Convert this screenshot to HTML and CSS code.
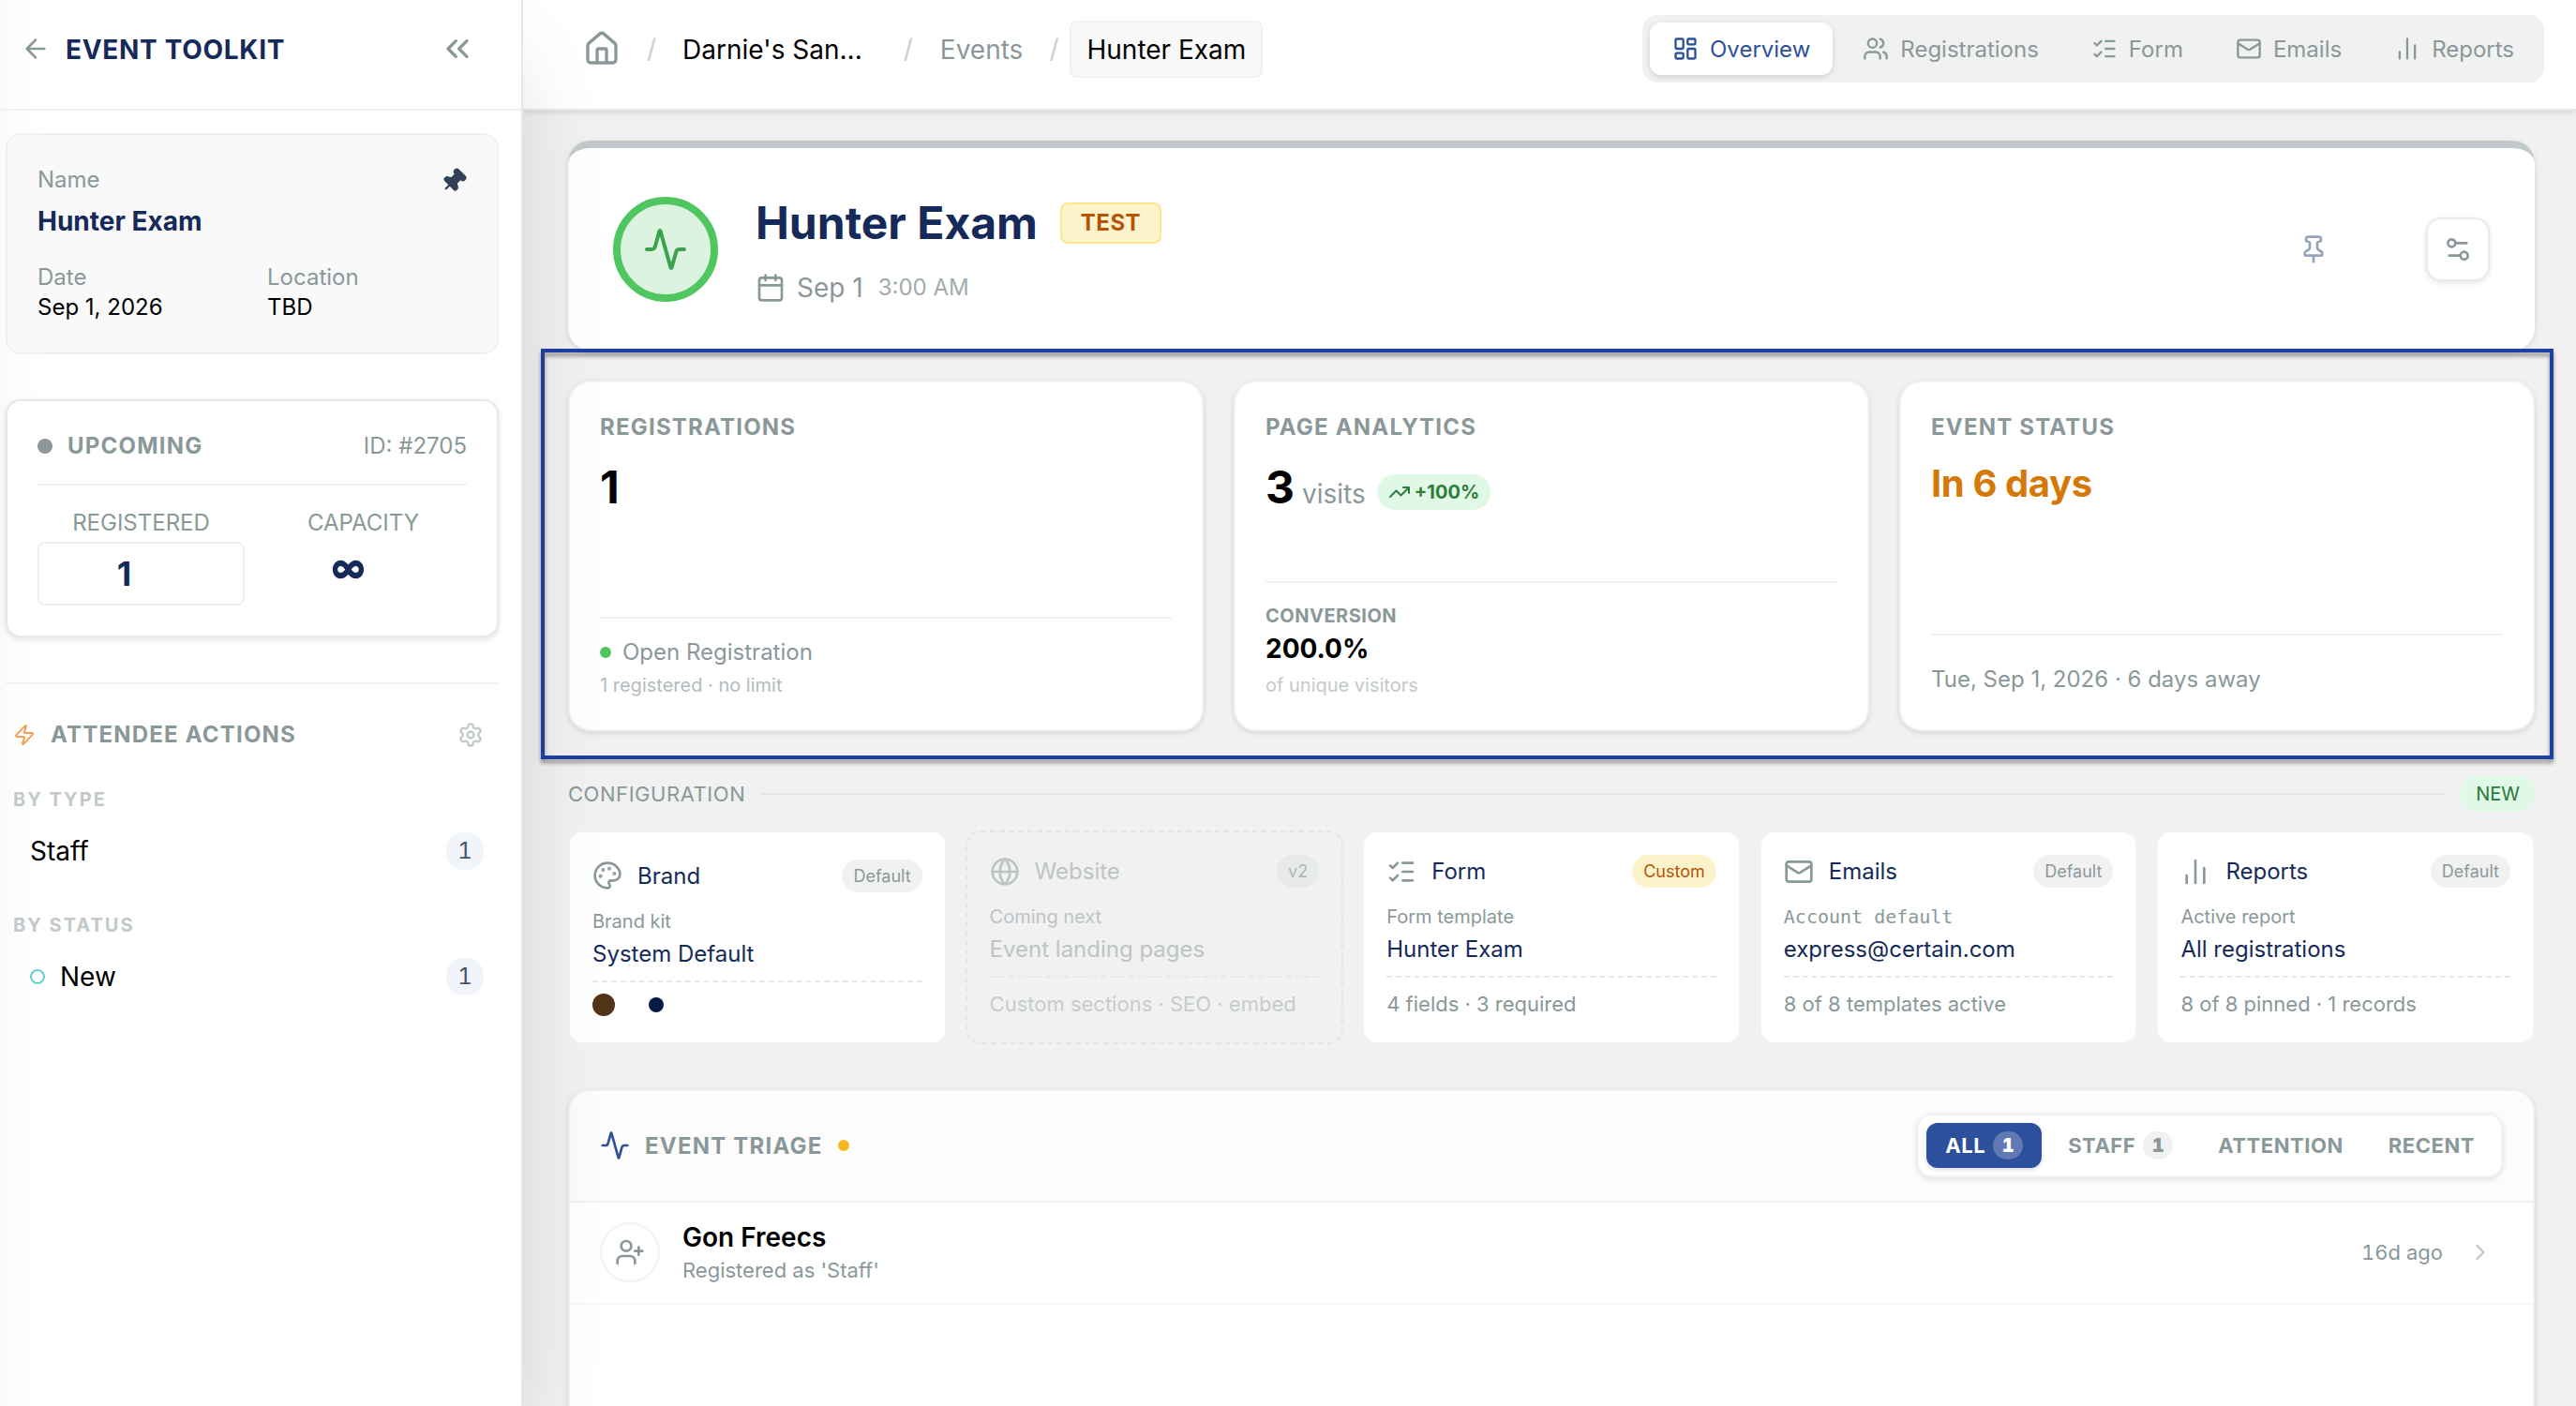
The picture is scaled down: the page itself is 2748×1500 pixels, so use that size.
FILE: index.html
```html
<!doctype html>
<html lang="en">
  <head>
    <meta charset="UTF-8" />
    <meta name="viewport" content="width=device-width, initial-scale=1.0" />
    <link rel="stylesheet" href="styles.css">
    <title>Hunter Exam - Event Overview</title>
  </head>
  <body>
    <!-- icon sprite -->
    <svg class="sprite" aria-hidden="true">
      <symbol id="arrow-left" viewBox="0 0 24 24"><path d="m12 19-7-7 7-7M19 12H5" /></symbol>
      <symbol id="chevrons-left" viewBox="0 0 24 24"><path d="m11 17-5-5 5-5M18 17l-5-5 5-5" /></symbol>
      <symbol id="chevron-right" viewBox="0 0 24 24"><path d="m9 18 6-6-6-6" /></symbol>
      <symbol id="pin" viewBox="0 0 24 24"><path d="M12 17v5M9 10.76a2 2 0 0 1-1.11 1.79l-1.78.9A2 2 0 0 0 5 15.24V16a1 1 0 0 0 1 1h12a1 1 0 0 0 1-1v-.76a2 2 0 0 0-1.11-1.79l-1.78-.9A2 2 0 0 1 15 10.76V7a1 1 0 0 1 1-1 2 2 0 0 0 0-4H8a2 2 0 0 0 0 4 1 1 0 0 1 1 1z" /></symbol>
      <symbol id="zap" viewBox="0 0 24 24"><path d="M4 14a1 1 0 0 1-.78-1.63l9.9-10.2a.5.5 0 0 1 .86.46l-1.92 6.02A1 1 0 0 0 13 10h7a1 1 0 0 1 .78 1.63l-9.9 10.2a.5.5 0 0 1-.86-.46l1.92-6.02A1 1 0 0 0 11 14z" /></symbol>
      <symbol id="settings" viewBox="0 0 24 24"><path d="M9.671 4.136a2.34 2.34 0 0 1 4.659 0 2.34 2.34 0 0 0 3.319 1.915 2.34 2.34 0 0 1 2.33 4.033 2.34 2.34 0 0 0 0 3.831 2.34 2.34 0 0 1-2.33 4.033 2.34 2.34 0 0 0-3.319 1.915 2.34 2.34 0 0 1-4.659 0 2.34 2.34 0 0 0-3.32-1.915 2.34 2.34 0 0 1-2.33-4.033 2.34 2.34 0 0 0 0-3.831A2.34 2.34 0 0 1 6.35 6.051a2.34 2.34 0 0 0 3.319-1.915" /><circle cx="12" cy="12" r="3" /></symbol>
      <symbol id="house" viewBox="0 0 24 24"><path d="M15 21v-8a1 1 0 0 0-1-1h-4a1 1 0 0 0-1 1v8M3 10a2 2 0 0 1 .709-1.528l7-5.999a2 2 0 0 1 2.582 0l7 5.999A2 2 0 0 1 21 10v9a2 2 0 0 1-2 2H5a2 2 0 0 1-2-2z" /></symbol>
      <symbol id="dashboard" viewBox="0 0 24 24"><rect width="7" height="9" x="3" y="3" rx="1" /><rect width="7" height="5" x="14" y="3" rx="1" /><rect width="7" height="9" x="14" y="12" rx="1" /><rect width="7" height="5" x="3" y="16" rx="1" /></symbol>
      <symbol id="users" viewBox="0 0 24 24"><path d="M16 21v-2a4 4 0 0 0-4-4H6a4 4 0 0 0-4 4v2M16 3.128a4 4 0 0 1 0 7.744M22 21v-2a4 4 0 0 0-3-3.87" /><circle cx="9" cy="7" r="4" /></symbol>
      <symbol id="list-checks" viewBox="0 0 24 24"><path d="M13 5h8M13 12h8M13 19h8M3 17l2 2 4-4M3 7l2 2 4-4" /></symbol>
      <symbol id="mail" viewBox="0 0 24 24"><path d="m22 7-8.991 5.727a2 2 0 0 1-2.009 0L2 7" /><rect x="2" y="4" width="20" height="16" rx="2" /></symbol>
      <symbol id="bars" viewBox="0 0 24 24"><path d="M5 21v-6M12 21V3M19 21V9" /></symbol>
      <symbol id="activity" viewBox="0 0 24 24"><path d="M22 12h-2.48a2 2 0 0 0-1.93 1.46l-2.35 8.36a.25.25 0 0 1-.48 0L9.24 2.18a.25.25 0 0 0-.48 0l-2.35 8.36A2 2 0 0 1 4.49 12H2" /></symbol>
      <symbol id="calendar" viewBox="0 0 24 24"><path d="M8 2v4M16 2v4M3 10h18" /><rect width="18" height="18" x="3" y="4" rx="2" /></symbol>
      <symbol id="sliders" viewBox="0 0 24 24"><path d="M14 17H5M19 7h-9" /><circle cx="17" cy="17" r="3" /><circle cx="7" cy="7" r="3" /></symbol>
      <symbol id="trending-up" viewBox="0 0 24 24"><path d="M16 7h6v6M22 7l-8.5 8.5-5-5L2 17" /></symbol>
      <symbol id="palette" viewBox="0 0 24 24"><path d="M12 22a1 1 0 0 1 0-20 10 9 0 0 1 10 9 5 5 0 0 1-5 5h-2.25a1.75 1.75 0 0 0-1.4 2.8l.3.4a1.75 1.75 0 0 1-1.4 2.8z" /><circle cx="13.5" cy="6.5" r=".5" fill="currentColor" /><circle cx="17.5" cy="10.5" r=".5" fill="currentColor" /><circle cx="6.5" cy="12.5" r=".5" fill="currentColor" /><circle cx="8.5" cy="7.5" r=".5" fill="currentColor" /></symbol>
      <symbol id="globe" viewBox="0 0 24 24"><circle cx="12" cy="12" r="10" /><path d="M12 2a14.5 14.5 0 0 0 0 20 14.5 14.5 0 0 0 0-20M2 12h20" /></symbol>
      <symbol id="user-plus" viewBox="0 0 24 24"><path d="M16 21v-2a4 4 0 0 0-4-4H6a4 4 0 0 0-4 4v2M19 8v6M22 11h-6" /><circle cx="9" cy="7" r="4" /></symbol>
    </svg>

    <div class="app">
      <aside class="sidebar">
        <div class="sidebar-header">
          <svg class="icon icon-32"><use href="#arrow-left" /></svg>
          <h2>EVENT TOOLKIT</h2>
          <svg class="icon icon-40"><use href="#chevrons-left" /></svg>
        </div>

        <div class="sidebar-body">
          <section class="info-card">
            <div class="info-top">
              <span class="info-label">Name</span>
              <svg class="icon icon-28 pin-filled"><use href="#pin" /></svg>
            </div>
            <div class="info-name">Hunter Exam</div>
            <div class="info-grid">
              <div>
                <div class="info-label">Date</div>
                <div class="info-value">Sep 1, 2026</div>
              </div>
              <div>
                <div class="info-label">Location</div>
                <div class="info-value">TBD</div>
              </div>
            </div>
          </section>

          <section class="count-card">
            <div class="count-top">
              <span class="status-dot"></span>
              <span class="status-text">UPCOMING</span>
              <span class="event-id">ID: #2705</span>
            </div>
            <div class="count-grid">
              <div>
                <div class="count-label">REGISTERED</div>
                <div class="count-value boxed">1</div>
              </div>
              <div>
                <div class="count-label">CAPACITY</div>
                <div class="count-value unlimited"><span>∞</span></div>
              </div>
            </div>
          </section>

          <section class="actions">
            <div class="actions-title">
              <svg class="icon icon-24 zap"><use href="#zap" /></svg>
              <h3>ATTENDEE ACTIONS</h3>
              <svg class="icon icon-28 gear"><use href="#settings" /></svg>
            </div>
            <div class="group-label">BY TYPE</div>
            <div class="action-row">
              <span>Staff</span>
              <span class="count-badge">1</span>
            </div>
            <div class="group-label second">BY STATUS</div>
            <div class="action-row">
              <span class="ring"></span>
              <span>New</span>
              <span class="count-badge">1</span>
            </div>
          </section>
        </div>
      </aside>

      <div class="main">
        <header class="topbar">
          <nav class="breadcrumb">
            <svg class="icon icon-40"><use href="#house" /></svg>
            <span class="slash first">/</span>
            <span class="crumb-account">Darnie's San...</span>
            <span class="slash">/</span>
            <span class="crumb-events">Events</span>
            <span class="slash last">/</span>
            <span class="crumb-current">Hunter Exam</span>
          </nav>
          <nav class="tabs">
            <a class="tab active"><svg class="icon icon-28"><use href="#dashboard" /></svg>Overview</a>
            <a class="tab"><svg class="icon icon-28"><use href="#users" /></svg>Registrations</a>
            <a class="tab"><svg class="icon icon-28"><use href="#list-checks" /></svg>Form</a>
            <a class="tab"><svg class="icon icon-28"><use href="#mail" /></svg>Emails</a>
            <a class="tab"><svg class="icon icon-28"><use href="#bars" /></svg>Reports</a>
          </nav>
        </header>

        <main class="content">
          <section class="hero">
            <div class="hero-badge"><svg class="icon icon-48"><use href="#activity" /></svg></div>
            <div class="hero-text">
              <div class="hero-title">
                <h1>Hunter Exam</h1>
                <span class="test-tag">TEST</span>
              </div>
              <div class="hero-date">
                <svg class="icon icon-32"><use href="#calendar" /></svg>
                <span>Sep 1</span>
                <span class="hero-time">3:00 AM</span>
              </div>
            </div>
            <svg class="icon icon-32 hero-pin"><use href="#pin" /></svg>
            <button class="hero-settings"><svg class="icon icon-32"><use href="#sliders" /></svg></button>
          </section>

          <div class="stats">
            <section class="stat">
              <h3>REGISTRATIONS</h3>
              <div class="stat-number">1</div>
              <div class="stat-foot">
                <div class="open-reg"><span class="green-dot"></span>Open Registration</div>
                <div class="stat-hint">1 registered · no limit</div>
              </div>
            </section>
            <section class="stat">
              <h3>PAGE ANALYTICS</h3>
              <div class="stat-number">3<span class="unit">visits</span><span class="trend"><svg class="icon icon-24"><use href="#trending-up" /></svg>+100%</span></div>
              <div class="stat-foot conversion">
                <div class="conv-label">CONVERSION</div>
                <div class="conv-value">200.0%</div>
                <div class="stat-hint light">of unique visitors</div>
              </div>
            </section>
            <section class="stat">
              <h3>EVENT STATUS</h3>
              <div class="stat-days">In 6 days</div>
              <div class="stat-foot away">Tue, Sep 1, 2026 · 6 days away</div>
            </section>
            <div class="highlight"></div>
          </div>

          <div class="config-head">
            <span class="config-title">CONFIGURATION</span>
            <span class="config-line"></span>
            <span class="new-tag">NEW</span>
          </div>

          <div class="config">
            <section class="config-card">
              <div class="config-top"><svg class="icon icon-32"><use href="#palette" /></svg>Brand<span class="pill">Default</span></div>
              <div class="config-label">Brand kit</div>
              <div class="config-value">System Default</div>
              <div class="config-foot swatches">
                <span class="swatch brown"></span>
                <span class="swatch white"></span>
                <span class="swatch navy"></span>
              </div>
            </section>
            <section class="config-card disabled">
              <div class="config-top"><svg class="icon icon-32"><use href="#globe" /></svg>Website<span class="pill">v2</span></div>
              <div class="config-label">Coming next</div>
              <div class="config-value">Event landing pages</div>
              <div class="config-foot">Custom sections · SEO · embed</div>
            </section>
            <section class="config-card">
              <div class="config-top"><svg class="icon icon-32"><use href="#list-checks" /></svg>Form<span class="pill custom">Custom</span></div>
              <div class="config-label">Form template</div>
              <div class="config-value">Hunter Exam</div>
              <div class="config-foot">4 fields · 3 required</div>
            </section>
            <section class="config-card">
              <div class="config-top"><svg class="icon icon-32"><use href="#mail" /></svg>Emails<span class="pill">Default</span></div>
              <div class="config-label mono">Account default</div>
              <div class="config-value">express@certain.com</div>
              <div class="config-foot">8 of 8 templates active</div>
            </section>
            <section class="config-card">
              <div class="config-top"><svg class="icon icon-32"><use href="#bars" /></svg>Reports<span class="pill">Default</span></div>
              <div class="config-label">Active report</div>
              <div class="config-value">All registrations</div>
              <div class="config-foot">8 of 8 pinned · 1 records</div>
            </section>
          </div>

          <section class="triage">
            <div class="triage-head">
              <svg class="icon icon-32"><use href="#activity" /></svg>
              <h3>EVENT TRIAGE</h3>
              <span class="amber-dot"></span>
              <div class="filters">
                <span class="filter active">ALL <b>1</b></span>
                <span class="filter">STAFF <b>1</b></span>
                <span class="filter">ATTENTION</span>
                <span class="filter">RECENT</span>
              </div>
            </div>
            <div class="triage-row">
              <span class="avatar"><svg class="icon icon-32"><use href="#user-plus" /></svg></span>
              <div class="person">
                <div class="person-name">Gon Freecs</div>
                <div class="person-sub">Registered as 'Staff'</div>
              </div>
              <span class="ago">16d ago</span>
              <svg class="icon icon-28 go"><use href="#chevron-right" /></svg>
            </div>
          </section>
        </main>
      </div>
    </div>
  </body>
</html>
```

FILE: styles.css
```css
* {
  box-sizing: border-box;
}

body {
  margin: 0;
  height: 1500px;
  overflow: hidden;
  font-family: Inter, "Liberation Sans", sans-serif;
  font-size: 24px;
  color: #000;
  background: #f1f1f1;
}

h1,
h2,
h3 {
  margin: 0;
}

.sprite {
  display: none;
}

.app {
  display: flex;
  height: 1500px;
}

/* icons */
.icon {
  flex: none;
  display: block;
  fill: none;
  stroke: currentColor;
  stroke-width: 2;
  stroke-linecap: round;
  stroke-linejoin: round;
}

.icon-24 { width: 24px; height: 24px; }
.icon-28 { width: 28px; height: 28px; }
.icon-32 { width: 32px; height: 32px; }
.icon-40 { width: 40px; height: 40px; }
.icon-48 { width: 48px; height: 48px; }

/* sidebar */
.sidebar {
  position: relative;
  z-index: 2;
  flex: none;
  width: 558px;
  border-right: 2px solid #e5e7e7;
  background: linear-gradient(90deg, #fafafa, #fdfdfd 14px, #fefefe 26px, #fff 60px);
  box-shadow: 0 50px 100px -24px rgba(0, 0, 0, 0.2);
}

.sidebar-header {
  display: flex;
  align-items: center;
  height: 118px;
  padding: 0 48px 12px 22px;
  border-bottom: 2px solid #f1f1f1;
  color: #8a9899;
}

.sidebar-header h2 {
  flex: 1;
  margin-left: 16px;
  padding-top: 2px;
  font-size: 28px;
  font-weight: 700;
  letter-spacing: 0.025em;
  color: #152a59;
}

.sidebar-body {
  padding: 24px 24px 0 6px;
}

.info-card {
  height: 236px;
  padding: 32px;
  border: 2px solid #f0f0f0;
  border-radius: 16px;
  background: #f9f9f9;
}

.info-top {
  display: flex;
  justify-content: space-between;
  height: 30px;
  line-height: 32px;
}

.info-label {
  color: #8a9899;
}

.pin-filled {
  margin-top: 3px;
  color: #334155;
  fill: currentColor;
  transform: rotate(45deg);
}

.info-name {
  margin-top: 9px;
  line-height: 42px;
  font-size: 28px;
  font-weight: 700;
  color: #152a59;
}

.info-grid {
  display: grid;
  grid-template-columns: 1fr 1fr;
  gap: 32px;
  margin-top: 23px;
  line-height: 32px;
}

.count-card {
  height: 254px;
  margin-top: 48px;
  padding: 32px;
  border: 2px solid #e5e9e9;
  border-radius: 16px;
  background: #fff;
  box-shadow: 0 2px 6px rgba(0, 0, 0, 0.12);
}

.count-top {
  display: flex;
  align-items: center;
  height: 58px;
  padding-bottom: 24px;
  border-bottom: 2px solid #f1f1f1;
  line-height: 32px;
  color: #8a9899;
}

.status-dot {
  width: 16px;
  height: 16px;
  border-radius: 50%;
  background: #8a9899;
}

.status-text {
  flex: 1;
  margin-left: 16px;
  font-weight: 700;
  letter-spacing: 0.05em;
}

.count-grid {
  display: grid;
  grid-template-columns: 1fr 1fr;
  gap: 16px;
  padding-top: 20px;
  text-align: center;
}

.count-label {
  line-height: 40px;
  color: #8a9899;
}

.count-value {
  height: 68px;
  font-size: 36px;
  font-weight: 700;
  line-height: 64px;
  color: #152a59;
}

.boxed {
  padding-right: 36px;
  border: 2px solid #f0f0f0;
  border-radius: 8px;
}

.unlimited {
  padding-right: 32px;
  font-weight: 800;
  line-height: 54px;
}

.unlimited span {
  display: inline-block;
  transform: scaleY(1.2);
}

.actions {
  margin-top: 48px;
  padding-top: 40px;
  border-top: 2px solid #f1f1f1;
}

.actions-title {
  display: flex;
  align-items: center;
  height: 28px;
  padding: 0 16px 0 8px;
}

.actions-title h3 {
  flex: 1;
  margin-left: 16px;
  padding-bottom: 2px;
  font-size: 24px;
  letter-spacing: 0.05em;
  color: #8a9899;
}

.zap {
  color: #f5a050;
}

.gear {
  color: #c2c9ca;
}

.group-label {
  margin: 40px 0 12px 8px;
  font-size: 20px;
  font-weight: 700;
  line-height: 30px;
  letter-spacing: 0.1em;
  color: #c2c9ca;
}

.group-label.second {
  margin-top: 36px;
}

.action-row {
  display: flex;
  align-items: center;
  gap: 16px;
  height: 56px;
  padding: 0 16px 0 26px;
  font-size: 28px;
}

.ring {
  width: 16px;
  height: 16px;
  border: 2px solid #66cfc9;
  border-radius: 50%;
}

.count-badge {
  width: 40px;
  height: 40px;
  margin-left: auto;
  border-radius: 18px;
  background: #f1f4fa;
  font-size: 24px;
  line-height: 40px;
  text-align: center;
  font-variant-numeric: tabular-nums;
  color: #475569;
}

/* top bar */
.main {
  flex: 1;
  min-width: 0;
}

.topbar {
  position: relative;
  display: flex;
  align-items: center;
  justify-content: space-between;
  height: 118px;
  padding: 0 34px 12px 64px;
  border-bottom: 2px solid #e5e9e9;
  background: #fff;
  box-shadow: 0 2px 6px rgba(0, 0, 0, 0.12);
}

.breadcrumb {
  display: flex;
  align-items: center;
  font-size: 28px;
  color: #8a9899;
}

.slash {
  margin: 0 29px 0 44px;
  color: #c8cfcf;
}

.slash.first {
  margin: 0 28px;
}

.slash.last {
  margin: 0 12px 0 28px;
}

.crumb-account {
  color: #000;
}

.crumb-account,
.crumb-events {
  padding-top: 2px;
}

.crumb-current {
  padding: 1px 16px 0;
  border: 2px solid #f1f1f1;
  border-radius: 8px;
  background: #f9f9f9;
  line-height: 56px;
  color: #000;
}

.tabs {
  display: flex;
  gap: 8px;
  padding: 8px;
  border-radius: 16px;
  background: #f1f1f1;
}

.tab {
  display: flex;
  align-items: center;
  gap: 12px;
  height: 56px;
  padding: 0 24px;
  border-radius: 12px;
  color: #8a9899;
}

.tab.active {
  background: #fff;
  color: #2c509c;
  box-shadow: 0 2px 6px rgba(0, 0, 0, 0.14);
}

.content {
  padding: 32px 44px 0 48px;
}

/* event summary */
.hero {
  display: flex;
  align-items: center;
  height: 224px;
  padding: 0 48px;
  border-top: 8px solid #c1c9cb;
  border-radius: 24px;
  background: #fff;
  box-shadow: 0 2px 6px rgba(0, 0, 0, 0.12);
}

.hero-badge {
  display: flex;
  align-items: center;
  justify-content: center;
  width: 112px;
  height: 112px;
  border: 8px solid #50c660;
  border-radius: 50%;
  background: #dcf3e0;
  color: #3da24d;
}

.hero-text {
  flex: 1;
  margin-left: 40px;
  padding-top: 3px;
}

.hero-title {
  display: flex;
  align-items: center;
  gap: 24px;
  height: 60px;
}

.hero-title h1 {
  font-size: 48px;
  font-weight: 700;
  color: #152a59;
}

.test-tag {
  height: 44px;
  padding: 0 20px;
  border: 2px solid #fbe68a;
  border-radius: 8px;
  background: #fdf3cb;
  font-weight: 700;
  line-height: 40px;
  letter-spacing: 0.02em;
  color: #b45309;
}

.hero-date {
  display: flex;
  align-items: center;
  height: 42px;
  margin-top: 18px;
  font-size: 28px;
  color: #8a9899;
}

.hero-date .icon {
  margin-right: 12px;
}

.hero-time {
  margin-left: 16px;
  font-size: 24px;
  color: #a1acad;
}

.hero-pin {
  margin-right: 104px;
  color: #94a3b8;
}

.hero-settings {
  display: flex;
  align-items: center;
  justify-content: center;
  width: 68px;
  height: 68px;
  padding: 0;
  border: 2px solid #e8ebeb;
  border-radius: 16px;
  background: #fff;
  color: #8a9899;
  box-shadow: 0 2px 6px rgba(0, 0, 0, 0.1);
}

/* stat cards */
.stats {
  position: relative;
  display: grid;
  grid-template-columns: repeat(3, 1fr);
  gap: 32px;
  margin-top: 32px;
}

.stat {
  display: flex;
  flex-direction: column;
  height: 374px;
  padding: 32px;
  border: 2px solid #f3f3f3;
  border-radius: 24px;
  background: #fff;
  box-shadow: 0 2px 6px rgba(0, 0, 0, 0.12);
}

/* blue outline around the stat cards */
.highlight {
  position: absolute;
  inset: -34px -20px -30px -29px;
  border: 4px solid #1e40a5;
  filter: drop-shadow(0 4px 2px rgba(0, 0, 0, 0.4));
}

.stat h3 {
  font-size: 24px;
  line-height: 32px;
  letter-spacing: 0.05em;
  color: #8a9899;
}

.stat-number {
  display: flex;
  align-items: baseline;
  height: 58px;
  margin-top: 19px;
  font-size: 48px;
  font-weight: 700;
  line-height: 58px;
}

.unit {
  margin-left: 8px;
  font-size: 28px;
  font-weight: 400;
  color: #8a9899;
}

.trend {
  display: flex;
  align-items: center;
  gap: 4px;
  height: 38px;
  margin-left: 12px;
  padding: 0 12px;
  border-radius: 19px;
  background: #e0f9e6;
  font-size: 20px;
  font-weight: 700;
  line-height: 38px;
  color: #2f7d3a;
}

.stat-days {
  margin-top: 19px;
  font-size: 40px;
  font-weight: 700;
  line-height: 50px;
  letter-spacing: -0.01em;
  color: #d47808;
}

.stat-foot {
  margin-top: auto;
  padding-top: 18px;
  border-top: 2px solid #f1f1f1;
  color: #8a9899;
}

.open-reg {
  display: flex;
  align-items: center;
  gap: 12px;
  line-height: 36px;
}

.green-dot,
.amber-dot {
  width: 12px;
  height: 12px;
  border-radius: 50%;
  background: #50c660;
}

.stat-hint {
  margin-top: 2px;
  font-size: 20px;
  line-height: 30px;
  color: #b3bcbd;
}

.stat-hint.light {
  margin-top: 3px;
  color: #c2c9ca;
}

.conversion {
  padding-top: 21px;
}

.conv-label {
  font-size: 20px;
  font-weight: 700;
  line-height: 29px;
  letter-spacing: 0.025em;
}

.conv-value {
  font-size: 28px;
  font-weight: 700;
  line-height: 41px;
  color: #000;
}

.away {
  padding-top: 26px;
  line-height: 42px;
}

/* configuration */
.config-head {
  display: flex;
  align-items: center;
  gap: 16px;
  height: 38px;
  margin-top: 48px;
}

.config-title {
  letter-spacing: 0.025em;
  font-size: 22px;
  color: #8a9899;
}

.config-line {
  flex: 1;
  height: 2px;
  background: #e3e5e5;
}

.new-tag {
  padding: 0 16px;
  border-radius: 16px;
  background: #e0f9e6;
  font-size: 20px;
  line-height: 38px;
  color: #2a7835;
}

.config {
  display: grid;
  grid-template-columns: repeat(5, 1fr);
  gap: 20px;
  margin-top: 20px;
}

.config-card {
  display: flex;
  flex-direction: column;
  justify-content: center;
  height: 228px;
  padding: 0 24px;
  border: 2px solid #f3f3f3;
  border-radius: 16px;
  background: #fff;
}

.config-top {
  display: flex;
  align-items: center;
  gap: 16px;
  height: 35px;
  color: #152a59;
}

.config-top .icon {
  color: #8a9899;
}

.pill {
  margin-left: auto;
  padding: 4px 12px;
  border-radius: 18px;
  background: #f1f1f1;
  font-size: 18px;
  line-height: 27px;
  color: #8a9899;
}

.pill.custom {
  background: #fdf3cb;
  color: #b45309;
}

.config-label {
  margin-top: 16px;
  font-size: 20px;
  line-height: 30px;
  color: #8a9899;
}

.config-label.mono {
  font-family: "DejaVu Sans Mono", monospace;
}

.config-value {
  margin-top: 2px;
  line-height: 36px;
  color: #152a59;
}

.config-foot {
  margin-top: 10px;
  padding-top: 12px;
  border-top: 2px dashed #e5e9e9;
  font-size: 22px;
  line-height: 33px;
  color: #8a9899;
}

.swatches {
  display: flex;
  align-items: center;
  gap: 8px;
}

.swatch {
  border-radius: 50%;
}

.swatch.brown {
  width: 24px;
  height: 24px;
  background: #523418;
}

.swatch.white {
  width: 20px;
  height: 20px;
  background: #fff;
}

.swatch.navy {
  width: 16px;
  height: 16px;
  background: #061c46;
}

.config-card.disabled {
  border: 2px dashed #e3e6e6;
  background: transparent;
}

.disabled .config-top,
.disabled .config-top .icon,
.disabled .config-label,
.disabled .config-value {
  color: #bcc4c5;
}

.disabled .config-foot {
  color: #c6cccd;
}

.disabled .pill {
  background: #e8eaea;
  color: #adb7b8;
}

/* triage */
.triage {
  height: 400px;
  margin-top: 48px;
  border: 2px solid #f1f1f1;
  border-radius: 24px;
  background: #fff;
  box-shadow: 0 2px 6px rgba(0, 0, 0, 0.12);
}

.triage-head {
  display: flex;
  align-items: center;
  height: 119px;
  padding: 0 32px 1px;
  border-bottom: 2px solid #f0f0f0;
  border-radius: 22px 22px 0 0;
  background: #fcfcfc;
  color: #2c509c;
}

.triage-head h3 {
  margin-left: 16px;
  font-size: 24px;
  letter-spacing: 0.05em;
  color: #8a9899;
}

.amber-dot {
  margin-left: 16px;
  background: #f5b81f;
}

.filters {
  display: flex;
  gap: 8px;
  margin-left: auto;
  padding: 8px;
  border: 2px solid #f3f3f3;
  border-radius: 16px;
  background: #fff;
  box-shadow: 0 2px 6px rgba(0, 0, 0, 0.12);
}

.filter {
  display: flex;
  align-items: center;
  gap: 8px;
  height: 48px;
  padding: 0 20px;
  border-radius: 12px;
  font-size: 22px;
  font-weight: 700;
  letter-spacing: 0.025em;
  color: #8a9899;
}

.filter b {
  width: 32px;
  height: 30px;
  border-radius: 15px;
  background: #f1f1f1;
  font-size: 20px;
  line-height: 30px;
  text-align: center;
  letter-spacing: 0;
  font-variant-numeric: tabular-nums;
}

.filter.active {
  background: #2c509c;
  color: #fff;
  box-shadow: 0 2px 4px rgba(0, 0, 0, 0.15);
}

.filter.active b {
  background: #6179b3;
}

.triage-row {
  display: flex;
  align-items: center;
  height: 109px;
  padding: 0 42px 2px 32px;
  border-bottom: 2px solid #f8f8f8;
}

.avatar {
  display: flex;
  align-items: center;
  justify-content: center;
  width: 64px;
  height: 64px;
  border: 2px solid #f1f1f1;
  border-radius: 50%;
  color: #8a9899;
}

.person {
  flex: 1;
  margin-left: 24px;
}

.person-name {
  font-size: 28px;
  font-weight: 600;
  line-height: 38px;
}

.person-sub {
  font-size: 22px;
  line-height: 32px;
  color: #8a9899;
}

.ago {
  font-size: 22px;
  font-variant-numeric: tabular-nums;
  color: #8a9899;
}

.go {
  margin-left: 26px;
  color: #c2c9ca;
}
```
